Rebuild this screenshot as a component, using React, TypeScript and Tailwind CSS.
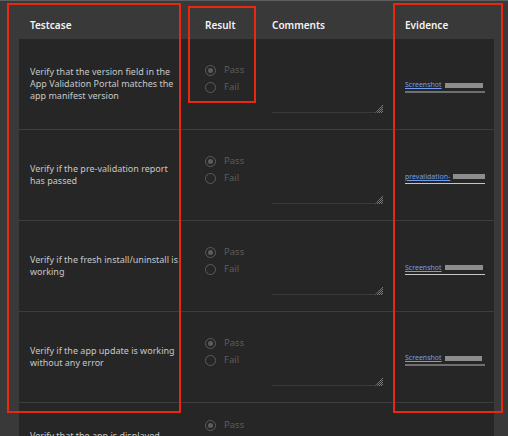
import { ReactNode } from 'react'

type Row = {
  lines: string[]
  evidence: { label: string; box: number; line: string }
  options?: string[]
}

const rows: Row[] = [
  {
    lines: ['Verify that the version field in the', 'App Validation Portal matches the', 'app manifest version'],
    evidence: { label: 'Screenshot', box: 38, line: 'border-[#6f6f6f] border-b-2' },
  },
  {
    lines: ['Verify if the pre-validation report', 'has passed'],
    evidence: { label: 'prevalidation-', box: 39, line: 'border-[#c6c6c6] border-b' },
  },
  {
    lines: ['Verify if the fresh install/uninstall is', 'working'],
    evidence: { label: 'Screenshot', box: 38, line: 'border-[#c6c6c6] border-b' },
  },
  {
    lines: ['Verify if the app update is working', 'without any error'],
    evidence: { label: 'Screenshot', box: 37, line: 'border-[#6f6f6f] border-b-2' },
  },
  {
    lines: ['Verify that the app is displayed', 'correctly in the app catalog', 'listing'],
    evidence: { label: 'Screenshot', box: 37, line: 'border-[#6f6f6f] border-b-2' },
    options: ['Pass', 'Fail', 'N/A'],
  },
]

function Radio({ label, checked }: { label: string; checked?: boolean }) {
  return (
    <label className="flex h-[17px] items-center gap-[8px] text-[9.5px] text-[#5c5c5c]">
      <span className="flex h-[11px] w-[11px] items-center justify-center rounded-full border border-[#5c5c5c]">
        {checked && <span className="h-[5px] w-[5px] rounded-full bg-[#5c5c5c]" />}
      </span>
      {label}
    </label>
  )
}

function ResizeGrip() {
  return (
    <svg width="8" height="9" viewBox="0 0 8 9" className="shrink-0">
      <defs>
        <pattern id="grip" width="2" height="2" patternUnits="userSpaceOnUse">
          <rect width="1" height="1" fill="#7a7a7a" />
          <rect x="1" y="1" width="1" height="1" fill="#7a7a7a" />
        </pattern>
      </defs>
      <polygon points="8,0 8,9 0,9" fill="url(#grip)" />
    </svg>
  )
}

function Cell({ children, className = '' }: { children: ReactNode; className?: string }) {
  return <div className={`flex px-[11px] ${className}`}>{children}</div>
}

function Frame({ className }: { className: string }) {
  return <div className={`pointer-events-none absolute border-2 border-[#e8290f] ${className}`} />
}

export default function App() {
  return (
    <div className="relative h-[436px] w-[508px] overflow-hidden bg-[#393939] font-['Noto_Sans',sans-serif]">
      <div className="h-px bg-[#5e5e5e]" />
      <div className="pl-[19px] pr-[14px]">
        {/* header */}
        <div className="grid h-[38px] grid-cols-[175px_67px_133px_100px] text-[10px] font-semibold leading-[14px] text-[#f4f4f4]">
          <Cell className="pt-[17px]">Testcase</Cell>
          <Cell className="pt-[17px]">Result</Cell>
          <Cell className="pt-[17px]">Comments</Cell>
          <Cell className="pt-[17px]">Evidence</Cell>
        </div>

        {/* body */}
        <div className="bg-[#262626]">
          {rows.map((row, i) => (
            <div
              key={i}
              className="grid h-[91px] grid-cols-[175px_67px_133px_100px] border-b border-[#3d3d3d]"
            >
              <Cell className="flex-col justify-center text-[9px] leading-[12px] text-[#c6c6c6]">
                {row.lines.map((l) => (
                  <span key={l} className="whitespace-nowrap">
                    {l}
                  </span>
                ))}
              </Cell>
              <Cell className="flex-col justify-center pb-[11px]">
                {(row.options ?? ['Pass', 'Fail']).map((o, j) => (
                  <Radio key={o} label={o} checked={j === 0} />
                ))}
              </Cell>
              <Cell className="items-center">
                <div className="flex h-[58px] w-[113px] items-end">
                  <div className="h-full flex-1 border-b border-[#3a3a3a]" />
                  <ResizeGrip />
                </div>
              </Cell>
              <Cell className="flex-col justify-center pt-[6px]">
                <div className={`flex w-[80px] items-center gap-[3px] pb-[2px] ${row.evidence.line}`}>
                  <a className="whitespace-nowrap text-[7px] leading-[8px] text-[#6f9ef0] underline">
                    {row.evidence.label}
                  </a>
                  <span className="h-[5px] bg-[#8d8d8d]" style={{ width: row.evidence.box }} />
                </div>
              </Cell>
            </div>
          ))}
        </div>
      </div>

      {/* annotation frames */}
      <Frame className="left-[7px] top-[3px] h-[410px] w-[174px]" />
      <Frame className="left-[188px] top-[6px] h-[97px] w-[68px]" />
      <Frame className="left-[393px] top-[3px] h-[410px] w-[110px]" />
    </div>
  )
}
